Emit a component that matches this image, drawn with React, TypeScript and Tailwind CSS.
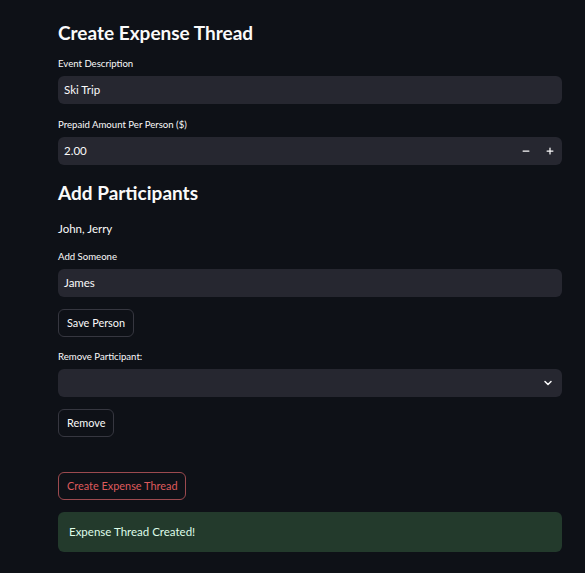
import { Minus, Plus, ChevronDown } from "lucide-react";

function Label({ children }: { children: React.ReactNode }) {
  return <p className="h-[12px] text-[9.6px] leading-[12px] text-[#fafafa]">{children}</p>;
}

function TextBox({ value }: { value: string }) {
  return (
    <div className="mt-[6px] flex h-[28px] items-center rounded-[6px] bg-[#262730] px-[6px] text-[11.5px] text-[#fafafa]">
      {value}
    </div>
  );
}

function Btn({ children, danger }: { children: React.ReactNode; danger?: boolean }) {
  return (
    <button
      className={`flex h-[28px] items-center rounded-[6px] border px-[8px] text-[10.9px] ${
        danger ? "border-[#9c4a4f] text-[#de5a5c]" : "border-[#363740] text-[#fafafa]"
      }`}
    >
      {children}
    </button>
  );
}

export default function App() {
  return (
    <div className="min-h-[573px] w-[585px] bg-[#0e1117] font-['Lato',sans-serif] text-[#fafafa]">
      <div className="mx-[58px] w-[504px] pt-[22px]">
        <h2 className="text-[19px] font-bold leading-[22px]">Create Expense Thread</h2>

        <div className="mt-[14px]">
          <Label>Event Description</Label>
          <TextBox value="Ski Trip" />
        </div>

        <div className="mt-[15px]">
          <Label>Prepaid Amount Per Person ($)</Label>
          <div className="mt-[6px] flex h-[28px] items-center rounded-[6px] bg-[#262730] pl-[6px] text-[11.5px]">
            <span className="flex-1">2.00</span>
            <span className="flex h-full w-[24px] items-center justify-center">
              <Minus size={10} strokeWidth={3} />
            </span>
            <span className="flex h-full w-[24px] items-center justify-center">
              <Plus size={10} strokeWidth={3} />
            </span>
          </div>
        </div>

        <h2 className="mt-[17px] text-[19px] font-bold leading-[22px]">Add Participants</h2>

        <p className="mt-[18px] text-[11.5px] leading-[14px]">John, Jerry</p>

        <div className="mt-[15px]">
          <Label>Add Someone</Label>
          <TextBox value="James" />
        </div>

        <div className="mt-[12px]">
          <Btn>Save Person</Btn>
        </div>

        <div className="mt-[14px]">
          <Label>Remove Participant:</Label>
          <div className="mt-[6px] flex h-[28px] items-center justify-end rounded-[6px] bg-[#262730] pr-[8px]">
            <ChevronDown size={12} strokeWidth={3} />
          </div>
        </div>

        <div className="mt-[12px]">
          <Btn>Remove</Btn>
        </div>

        <div className="mt-[35px]">
          <Btn danger>Create Expense Thread</Btn>
        </div>

        <div className="mt-[12px] flex h-[40px] items-center rounded-[6px] bg-[#233a2c] px-[11px] text-[11.5px] text-[#dffde9]">
          Expense Thread Created!
        </div>
      </div>
    </div>
  );
}
